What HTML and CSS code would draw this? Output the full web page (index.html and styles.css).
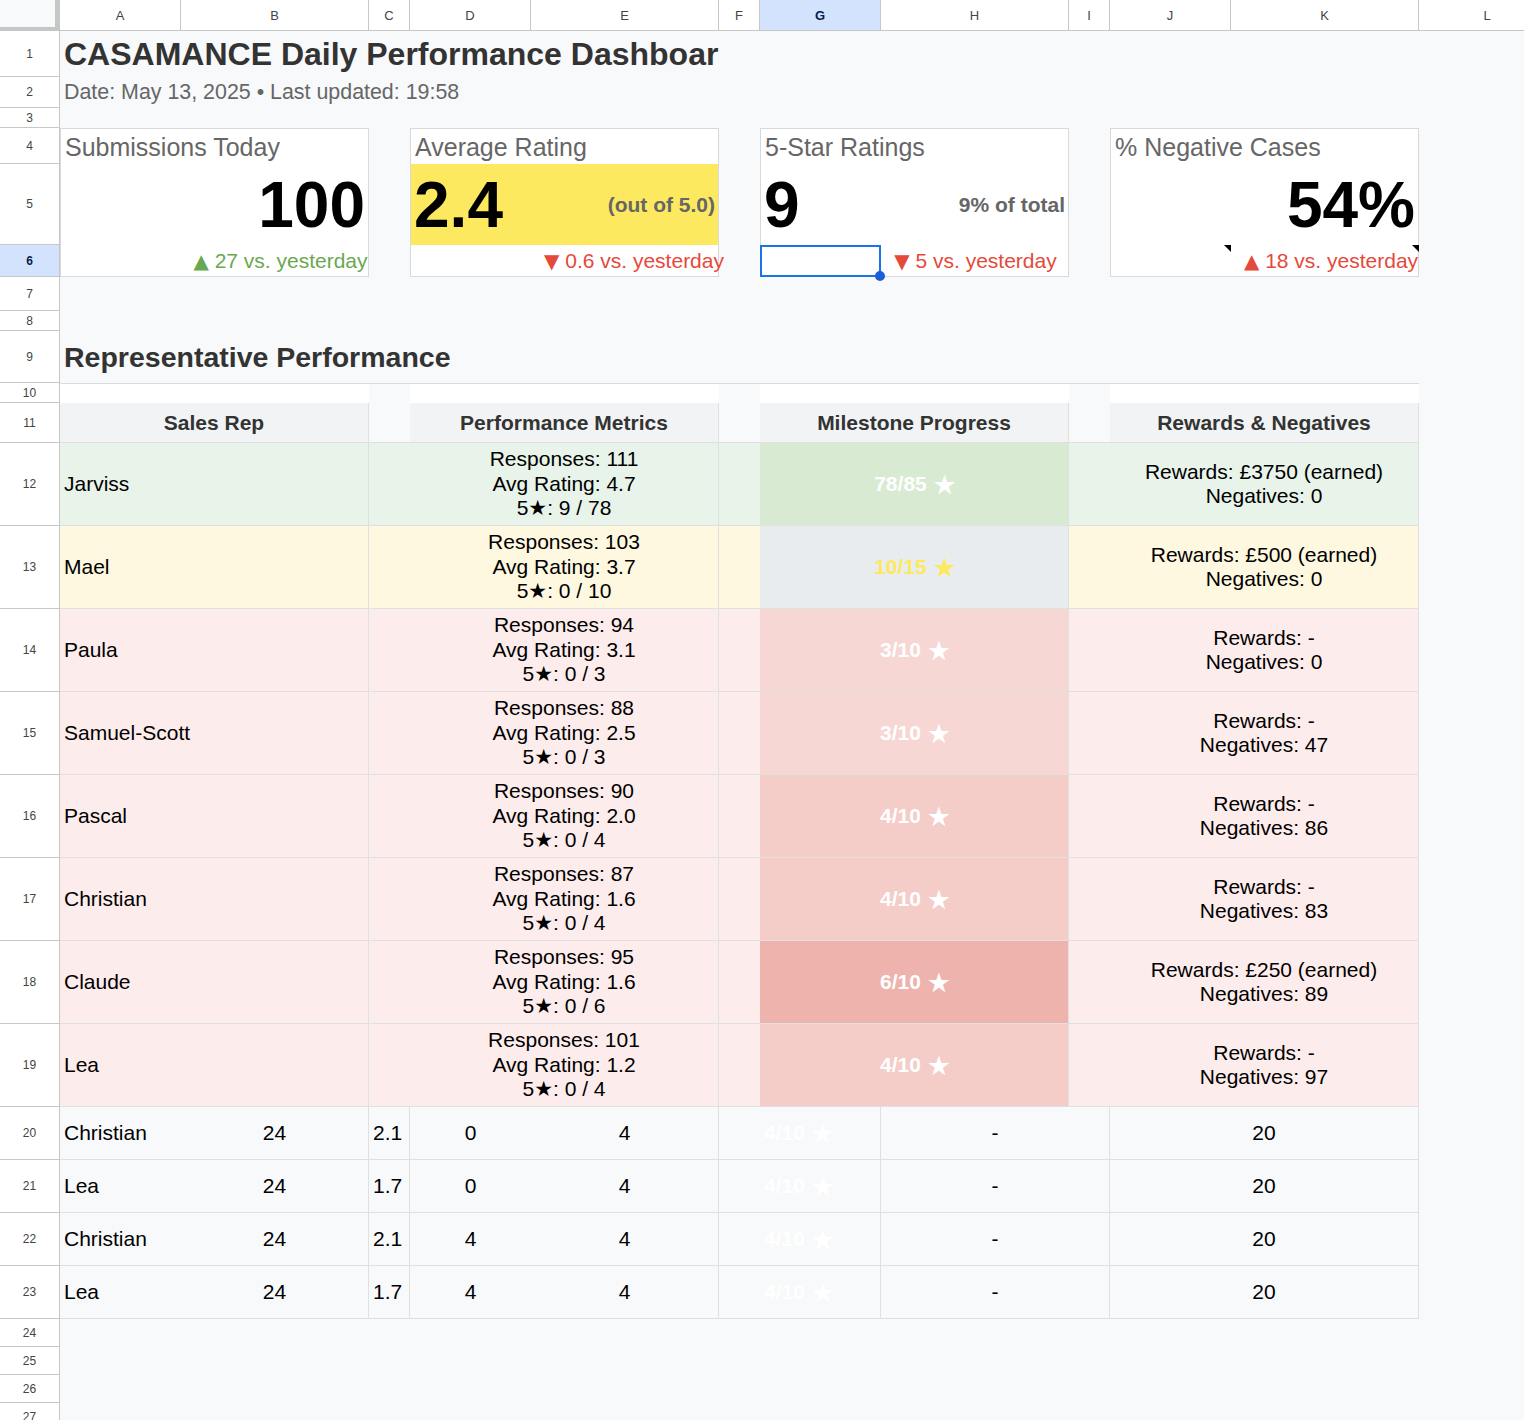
FILE: index.html
```html
<!DOCTYPE html>
<html>
<head>
<meta charset="utf-8">
<title>CASAMANCE Daily Performance Dashboard</title>
<link rel="stylesheet" href="styles.css">
</head>
<body>
<div class="sheet">
  <div class="corner"></div>
  <div class="ch">A</div>
  <div class="ch">B</div>
  <div class="ch">C</div>
  <div class="ch">D</div>
  <div class="ch">E</div>
  <div class="ch">F</div>
  <div class="ch sel">G</div>
  <div class="ch">H</div>
  <div class="ch">I</div>
  <div class="ch">J</div>
  <div class="ch">K</div>
  <div class="ch last">L</div>

  <div class="rh">1</div>
  <div class="title">CASAMANCE Daily Performance Dashboard</div>

  <div class="rh">2</div>
  <div class="subtitle">Date: May 13, 2025 • Last updated: 19:58</div>

  <div class="rh">3</div>

  <div class="rh">4</div>
  <div class="card c1">
    <div class="card-label">Submissions Today</div>
    <div class="card-main end"><span class="big">100</span></div>
    <div class="card-delta up d1"><span class="tri">▲</span>&nbsp;27 vs. yesterday</div>
  </div>
  <div class="card c2">
    <div class="card-label">Average Rating</div>
    <div class="card-main yellow"><span class="big">2.4</span><span class="aside">(out of 5.0)</span></div>
    <div class="card-delta down d2"><span class="tri">▼</span>&nbsp;0.6 vs. yesterday</div>
  </div>
  <div class="card c3">
    <div class="card-label">5-Star Ratings</div>
    <div class="card-main"><span class="big">9</span><span class="aside">9% of total</span></div>
    <div class="selection"></div>
    <div class="card-delta down d3"><span class="tri">▼</span>&nbsp;5 vs. yesterday</div>
  </div>
  <div class="card c4">
    <div class="card-label">% Negative Cases</div>
    <div class="card-main end"><span class="big">54%</span></div>
    <div class="note-cell note"></div>
    <div class="card-delta bad d4 note"><span class="tri">▲</span>&nbsp;18 vs. yesterday</div>
  </div>

  <div class="rh">5</div>
  <div class="rh sel">6</div>
  <div class="rh">7</div>
  <div class="rh">8</div>

  <div class="rh">9</div>
  <div class="section-title">Representative Performance</div>

  <div class="rh">10</div>
  <div class="t-top wide"></div>
  <div class="t-top"></div>
  <div class="t-top wide"></div>
  <div class="t-top"></div>
  <div class="t-top wide"></div>
  <div class="t-top"></div>
  <div class="t-top wide"></div>

  <div class="rh">11</div>
  <div class="th">Sales Rep</div>
  <div class="th-gap"></div>
  <div class="th">Performance Metrics</div>
  <div class="th-gap"></div>
  <div class="th">Milestone Progress</div>
  <div class="th-gap"></div>
  <div class="th">Rewards &amp; Negatives</div>

  <div class="rh">12</div>
  <div class="td-name g">Jarviss</div>
  <div class="td-gap g"></div>
  <div class="td-multi g"><span>Responses: 111</span><span>Avg Rating: 4.7</span><span>5★: 9 / 78</span></div>
  <div class="td-gap g"></div>
  <div class="td-mile m-green">78/85&nbsp;<span class="star">★</span></div>
  <div class="td-gap g"></div>
  <div class="td-multi g"><span>Rewards: £3750 (earned)</span><span>Negatives: 0</span></div>

  <div class="rh">13</div>
  <div class="td-name y">Mael</div>
  <div class="td-gap y"></div>
  <div class="td-multi y"><span>Responses: 103</span><span>Avg Rating: 3.7</span><span>5★: 0 / 10</span></div>
  <div class="td-gap y"></div>
  <div class="td-mile m-grey">10/15&nbsp;<span class="star">★</span></div>
  <div class="td-gap y"></div>
  <div class="td-multi y"><span>Rewards: £500 (earned)</span><span>Negatives: 0</span></div>

  <div class="rh">14</div>
  <div class="td-name p">Paula</div>
  <div class="td-gap p"></div>
  <div class="td-multi p"><span>Responses: 94</span><span>Avg Rating: 3.1</span><span>5★: 0 / 3</span></div>
  <div class="td-gap p"></div>
  <div class="td-mile m-r1">3/10&nbsp;<span class="star">★</span></div>
  <div class="td-gap p"></div>
  <div class="td-multi p"><span>Rewards: -</span><span>Negatives: 0</span></div>

  <div class="rh">15</div>
  <div class="td-name p">Samuel-Scott</div>
  <div class="td-gap p"></div>
  <div class="td-multi p"><span>Responses: 88</span><span>Avg Rating: 2.5</span><span>5★: 0 / 3</span></div>
  <div class="td-gap p"></div>
  <div class="td-mile m-r1">3/10&nbsp;<span class="star">★</span></div>
  <div class="td-gap p"></div>
  <div class="td-multi p"><span>Rewards: -</span><span>Negatives: 47</span></div>

  <div class="rh">16</div>
  <div class="td-name p">Pascal</div>
  <div class="td-gap p"></div>
  <div class="td-multi p"><span>Responses: 90</span><span>Avg Rating: 2.0</span><span>5★: 0 / 4</span></div>
  <div class="td-gap p"></div>
  <div class="td-mile m-r2">4/10&nbsp;<span class="star">★</span></div>
  <div class="td-gap p"></div>
  <div class="td-multi p"><span>Rewards: -</span><span>Negatives: 86</span></div>

  <div class="rh">17</div>
  <div class="td-name p">Christian</div>
  <div class="td-gap p"></div>
  <div class="td-multi p"><span>Responses: 87</span><span>Avg Rating: 1.6</span><span>5★: 0 / 4</span></div>
  <div class="td-gap p"></div>
  <div class="td-mile m-r2">4/10&nbsp;<span class="star">★</span></div>
  <div class="td-gap p"></div>
  <div class="td-multi p"><span>Rewards: -</span><span>Negatives: 83</span></div>

  <div class="rh">18</div>
  <div class="td-name p">Claude</div>
  <div class="td-gap p"></div>
  <div class="td-multi p"><span>Responses: 95</span><span>Avg Rating: 1.6</span><span>5★: 0 / 6</span></div>
  <div class="td-gap p"></div>
  <div class="td-mile m-r3">6/10&nbsp;<span class="star">★</span></div>
  <div class="td-gap p"></div>
  <div class="td-multi p"><span>Rewards: £250 (earned)</span><span>Negatives: 89</span></div>

  <div class="rh">19</div>
  <div class="td-name p">Lea</div>
  <div class="td-gap p"></div>
  <div class="td-multi p"><span>Responses: 101</span><span>Avg Rating: 1.2</span><span>5★: 0 / 4</span></div>
  <div class="td-gap p"></div>
  <div class="td-mile m-r2">4/10&nbsp;<span class="star">★</span></div>
  <div class="td-gap p"></div>
  <div class="td-multi p"><span>Rewards: -</span><span>Negatives: 97</span></div>

  <div class="rh">20</div>
  <div class="dr left">Christian</div>
  <div class="dr mid bd">24</div>
  <div class="dr left bd">2.1</div>
  <div class="dr mid">0</div>
  <div class="dr mid bd">4</div>
  <div class="dr mid bd wide faint">4/10&nbsp;<span class="star">★</span></div>
  <div class="dr mid bd wide">-</div>
  <div class="dr mid bd wide">20</div>

  <div class="rh">21</div>
  <div class="dr left">Lea</div>
  <div class="dr mid bd">24</div>
  <div class="dr left bd">1.7</div>
  <div class="dr mid">0</div>
  <div class="dr mid bd">4</div>
  <div class="dr mid bd wide faint">4/10&nbsp;<span class="star">★</span></div>
  <div class="dr mid bd wide">-</div>
  <div class="dr mid bd wide">20</div>

  <div class="rh">22</div>
  <div class="dr left">Christian</div>
  <div class="dr mid bd">24</div>
  <div class="dr left bd">2.1</div>
  <div class="dr mid">4</div>
  <div class="dr mid bd">4</div>
  <div class="dr mid bd wide faint">4/10&nbsp;<span class="star">★</span></div>
  <div class="dr mid bd wide">-</div>
  <div class="dr mid bd wide">20</div>

  <div class="rh">23</div>
  <div class="dr left">Lea</div>
  <div class="dr mid bd">24</div>
  <div class="dr left bd">1.7</div>
  <div class="dr mid">4</div>
  <div class="dr mid bd">4</div>
  <div class="dr mid bd wide faint">4/10&nbsp;<span class="star">★</span></div>
  <div class="dr mid bd wide">-</div>
  <div class="dr mid bd wide">20</div>

  <div class="rh">24</div>
  <div class="rh">25</div>
  <div class="rh">26</div>
  <div class="rh">27</div>
</div>
</body>
</html>
```

FILE: styles.css
```css
* {
  box-sizing: border-box;
  margin: 0;
  padding: 0;
}

html,
body {
  width: 1524px;
  height: 1420px;
  overflow: hidden;
}

body {
  background: #f8f9fa;
  font-family: "Liberation Sans", Arial, "DejaVu Sans", sans-serif;
  color: #000;
}

.sheet {
  display: grid;
  width: 1555px;
  grid-template-columns: 60px 121px 188px 41px 121px 188px 41px 121px 188px 41px 121px 188px 136px;
  grid-template-rows: 31px 46px 31px 20px 36px 81px 32px 34px 20px 52px 20px 40px repeat(8, 83px) repeat(4, 53px) repeat(4, 28px);
}

/* headers */
.corner {
  background: #f8f9fa;
  border-right: 5px solid #c4c7c5;
  border-bottom: 4px solid #c4c7c5;
}

.ch {
  background: #fff;
  border-right: 1px solid #c7c7c7;
  border-bottom: 1px solid #c7c7c7;
  display: flex;
  align-items: center;
  justify-content: center;
  font-size: 13px;
  color: #444;
}

.ch.last {
  border-right: none;
}

.ch.sel,
.rh.sel {
  background: #d3e3fd;
  color: #041e49;
  font-weight: bold;
}

.rh {
  grid-column: 1;
  background: #fff;
  border-right: 1px solid #c7c7c7;
  border-bottom: 1px solid #c7c7c7;
  display: flex;
  align-items: center;
  justify-content: center;
  font-size: 12px;
  color: #444;
}

/* titles */
.title {
  grid-column: span 5;
  overflow: hidden;
  white-space: nowrap;
  display: flex;
  align-items: center;
  padding-left: 4px;
  font-size: 32px;
  font-weight: bold;
  color: #333;
}

.subtitle {
  grid-column: span 12;
  white-space: nowrap;
  display: flex;
  align-items: center;
  padding-left: 4px;
  font-size: 21.4px;
  color: #666;
}

.section-title {
  grid-column: span 12;
  white-space: nowrap;
  display: flex;
  align-items: center;
  padding-left: 4px;
  font-size: 28.5px;
  font-weight: bold;
  color: #333;
}

/* KPI cards */
.card {
  grid-row: span 3;
  background: #fff;
  border: 1px solid #d9d9d9;
  display: grid;
  grid-template-columns: 120px minmax(0, 1fr);
  grid-template-rows: 35px 81px minmax(0, 1fr);
}

.c1 { grid-column: 2 / span 2; }
.c2 { grid-column: 5 / span 2; }
.c3 { grid-column: 8 / span 2; }
.c4 { grid-column: 11 / span 2; }

.card-label {
  grid-column: 1 / -1;
  display: flex;
  align-items: center;
  padding-left: 4px;
  padding-top: 2px;
  font-size: 25px;
  color: #666;
  white-space: nowrap;
}

.card-main {
  grid-column: 1 / -1;
  display: flex;
  align-items: center;
  justify-content: space-between;
  padding: 0 3px;
  min-width: 0;
}

.card-main.end {
  justify-content: flex-end;
}

.card-main.yellow {
  background: #fde95f;
}

.big {
  font-size: 64px;
  font-weight: bold;
  color: #000;
  line-height: 1;
}

.aside {
  font-size: 21px;
  font-weight: bold;
  color: #666;
}

.card-delta {
  grid-column: 2;
  grid-row: 3;
  min-width: 0;
  display: flex;
  align-items: center;
  justify-content: center;
  white-space: nowrap;
  font-size: 21px;
}

.tri {
  font-family: "DejaVu Sans", sans-serif;
  font-size: 20px;
}

.card-delta.up { color: #6aa84f; }
.card-delta.down,
.card-delta.bad { color: #e5493a; }

.d1 { padding-left: 12px; }
.d2 { padding-left: 19px; }
.d3 { padding-left: 2px; }
.d4 { padding-left: 13px; }

.selection {
  grid-column: 1;
  grid-row: 3;
  margin: 0 0 -1px -1px;
  border: 2px solid #1a73e8;
  position: relative;
}

.selection::after {
  content: "";
  position: absolute;
  right: -6px;
  bottom: -6px;
  width: 10px;
  height: 10px;
  border-radius: 50%;
  background: #1b5fd6;
}

.note-cell {
  grid-column: 1;
  grid-row: 3;
}

.note {
  position: relative;
}

.note::after {
  content: "";
  position: absolute;
  top: 0;
  right: 0;
  width: 0;
  height: 0;
  border-top: 7px solid #000;
  border-left: 7px solid transparent;
}

.d4.note::after {
  right: -1px;
}

/* table */
.t-top {
  border-top: 1px solid #dadce0;
}

.t-top.wide {
  grid-column: span 2;
  background: #fff;
}

.sheet > .t-top:last-of-type {
  border-right: 1px solid #dadce0;
}

.th {
  grid-column: span 2;
  background: #f1f3f4;
  border-right: 1px solid #e0e0e0;
  border-bottom: 1px solid #e0e0e0;
  display: flex;
  align-items: center;
  justify-content: center;
  font-size: 21px;
  font-weight: bold;
  color: #333;
  white-space: nowrap;
}

.th-gap {
  border-bottom: 1px solid #e0e0e0;
}

.g { background: #e8f3ea; }
.y { background: #fef8e1; }
.p { background: #fdecec; }

.td-name {
  grid-column: span 2;
  border-right: 1px solid #e0e0e0;
  border-bottom: 1px solid #e0e0e0;
  display: flex;
  align-items: center;
  padding-left: 4px;
  font-size: 21px;
  white-space: nowrap;
}

.td-gap {
  border-bottom: 1px solid #e0e0e0;
}

.td-multi {
  grid-column: span 2;
  border-right: 1px solid #e0e0e0;
  border-bottom: 1px solid #e0e0e0;
  display: flex;
  flex-direction: column;
  align-items: center;
  justify-content: center;
  font-size: 21px;
  line-height: 24.5px;
  white-space: nowrap;
}

.td-mile {
  grid-column: span 2;
  border-right: 1px solid #e0e0e0;
  border-bottom: 1px solid #e0e0e0;
  display: flex;
  align-items: center;
  justify-content: center;
  padding-left: 3px;
  font-size: 21px;
  font-weight: bold;
  color: #fff;
  white-space: nowrap;
}

.star {
  font-family: "DejaVu Sans", sans-serif;
  font-size: 27px;
  font-weight: normal;
  line-height: 1;
}

.m-green { background: #d9ead3; }
.m-grey { background: #e8ecef; color: #fde95f; }
.m-r1 { background: #f6d7d4; }
.m-r2 { background: #f4ccc8; }
.m-r3 { background: #eeb3ad; }

.dr {
  border-bottom: 1px solid #e0e0e0;
  display: flex;
  align-items: center;
  font-size: 21px;
  white-space: nowrap;
}

.dr.left {
  padding-left: 4px;
}

.dr.mid {
  justify-content: center;
}

.dr.bd {
  border-right: 1px solid #e0e0e0;
}

.dr.wide {
  grid-column: span 2;
}

.dr.faint {
  color: #fff;
  font-weight: bold;
}
```
